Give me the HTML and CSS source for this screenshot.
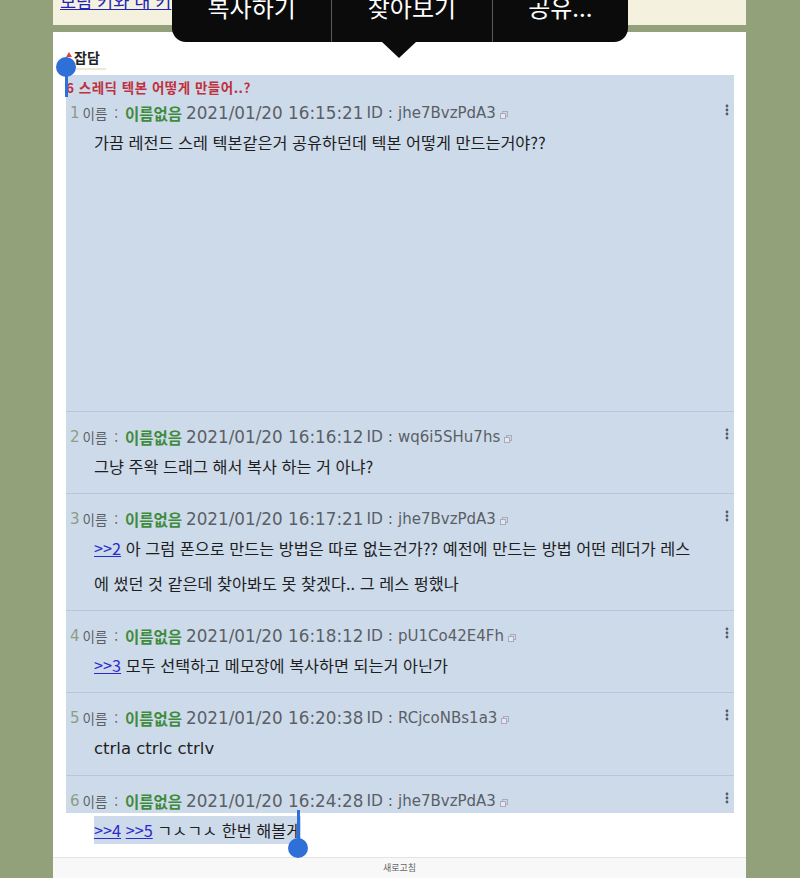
FILE: index.html
```html
<!DOCTYPE html>
<html lang="ko">
<head>
<meta charset="utf-8">
<title>스레딕</title>
<link rel="stylesheet" href="styles.css">
</head>
<body>
<div class="page">
  <div class="topbox"><a class="toplink" href="#">보림 키와 내 키</a></div>
  <div class="panel">
    <div class="content">
      <div class="tab"><span class="tri"></span>잡담</div>
      <div class="sel">
        <div class="title">6 스레딕 텍본 어떻게 만들어..?</div>
        <div class="post first">
          <div class="head"><span class="num">1</span><span class="lbl">이름 :</span><span class="name">이름없음</span><span class="date">2021/01/20 16:15:21</span><span class="id">ID : <span class="idv">jhe7BvzPdA3</span></span><svg class="copy" viewBox="0 0 8 8" width="8" height="8"><rect x="2.5" y="0.5" width="5" height="5" fill="none" stroke="#aab" stroke-width="1"/><rect x="0.5" y="2.5" width="5" height="5" fill="#e4e8ee" stroke="#aab" stroke-width="1"/></svg><svg class="more" viewBox="0 0 4 12" width="4" height="12"><circle cx="2" cy="2" r="1.4"/><circle cx="2" cy="6" r="1.4"/><circle cx="2" cy="10" r="1.4"/></svg></div>
          <div class="body">가끔 레전드 스레 텍본같은거 공유하던데 텍본 어떻게 만드는거야??</div>
        </div>
        <div class="post">
          <div class="head"><span class="num">2</span><span class="lbl">이름 :</span><span class="name">이름없음</span><span class="date">2021/01/20 16:16:12</span><span class="id">ID : <span class="idv">wq6i5SHu7hs</span></span><svg class="copy" viewBox="0 0 8 8" width="8" height="8"><rect x="2.5" y="0.5" width="5" height="5" fill="none" stroke="#aab" stroke-width="1"/><rect x="0.5" y="2.5" width="5" height="5" fill="#e4e8ee" stroke="#aab" stroke-width="1"/></svg><svg class="more" viewBox="0 0 4 12" width="4" height="12"><circle cx="2" cy="2" r="1.4"/><circle cx="2" cy="6" r="1.4"/><circle cx="2" cy="10" r="1.4"/></svg></div>
          <div class="body">그냥 주왁 드래그 해서 복사 하는 거 아냐?</div>
        </div>
        <div class="post">
          <div class="head"><span class="num">3</span><span class="lbl">이름 :</span><span class="name">이름없음</span><span class="date">2021/01/20 16:17:21</span><span class="id">ID : <span class="idv">jhe7BvzPdA3</span></span><svg class="copy" viewBox="0 0 8 8" width="8" height="8"><rect x="2.5" y="0.5" width="5" height="5" fill="none" stroke="#aab" stroke-width="1"/><rect x="0.5" y="2.5" width="5" height="5" fill="#e4e8ee" stroke="#aab" stroke-width="1"/></svg><svg class="more" viewBox="0 0 4 12" width="4" height="12"><circle cx="2" cy="2" r="1.4"/><circle cx="2" cy="6" r="1.4"/><circle cx="2" cy="10" r="1.4"/></svg></div>
          <div class="body"><a class="anchor" href="#">&gt;&gt;2</a> 아 그럼 폰으로 만드는 방법은 따로 없는건가?? 예전에 만드는 방법 어떤 레더가 레스<br>에 썼던 것 같은데 찾아봐도 못 찾겠다.. 그 레스 펑했나</div>
        </div>
        <div class="post">
          <div class="head"><span class="num">4</span><span class="lbl">이름 :</span><span class="name">이름없음</span><span class="date">2021/01/20 16:18:12</span><span class="id">ID : <span class="idv">pU1Co42E4Fh</span></span><svg class="copy" viewBox="0 0 8 8" width="8" height="8"><rect x="2.5" y="0.5" width="5" height="5" fill="none" stroke="#aab" stroke-width="1"/><rect x="0.5" y="2.5" width="5" height="5" fill="#e4e8ee" stroke="#aab" stroke-width="1"/></svg><svg class="more" viewBox="0 0 4 12" width="4" height="12"><circle cx="2" cy="2" r="1.4"/><circle cx="2" cy="6" r="1.4"/><circle cx="2" cy="10" r="1.4"/></svg></div>
          <div class="body"><a class="anchor" href="#">&gt;&gt;3</a> 모두 선택하고 메모장에 복사하면 되는거 아닌가</div>
        </div>
        <div class="post">
          <div class="head"><span class="num">5</span><span class="lbl">이름 :</span><span class="name">이름없음</span><span class="date">2021/01/20 16:20:38</span><span class="id">ID : <span class="idv">RCjcoNBs1a3</span></span><svg class="copy" viewBox="0 0 8 8" width="8" height="8"><rect x="2.5" y="0.5" width="5" height="5" fill="none" stroke="#aab" stroke-width="1"/><rect x="0.5" y="2.5" width="5" height="5" fill="#e4e8ee" stroke="#aab" stroke-width="1"/></svg><svg class="more" viewBox="0 0 4 12" width="4" height="12"><circle cx="2" cy="2" r="1.4"/><circle cx="2" cy="6" r="1.4"/><circle cx="2" cy="10" r="1.4"/></svg></div>
          <div class="body"><span class="latin">ctrla ctrlc ctrlv</span></div>
        </div>
        <div class="post last">
          <div class="head"><span class="num">6</span><span class="lbl">이름 :</span><span class="name">이름없음</span><span class="date">2021/01/20 16:24:28</span><span class="id">ID : <span class="idv">jhe7BvzPdA3</span></span><svg class="copy" viewBox="0 0 8 8" width="8" height="8"><rect x="2.5" y="0.5" width="5" height="5" fill="none" stroke="#aab" stroke-width="1"/><rect x="0.5" y="2.5" width="5" height="5" fill="#e4e8ee" stroke="#aab" stroke-width="1"/></svg><svg class="more" viewBox="0 0 4 12" width="4" height="12"><circle cx="2" cy="2" r="1.4"/><circle cx="2" cy="6" r="1.4"/><circle cx="2" cy="10" r="1.4"/></svg></div>
        </div>
      </div>
      <div class="body lastbody"><span class="hl"><a class="anchor" href="#">&gt;&gt;4</a> <a class="anchor" href="#">&gt;&gt;5</a> ㄱㅅㄱㅅ 한번 해볼게</span></div>
    </div>
    <div class="footer">새로고침</div>
  </div>
</div>

<div class="popover">
  <div class="pop-item w1">복사하기</div>
  <div class="pop-item w1 sep">찾아보기</div>
  <div class="pop-item w2 sep">공유...</div>
</div>
<div class="pop-arrow"></div>

<div class="handle start"><span class="knob"></span><span class="stem"></span></div>
<div class="handle end"><span class="stem"></span><span class="knob"></span></div>
</body>
</html>
```

FILE: styles.css
```css
html, body {
  margin: 0;
  padding: 0;
}
body {
  background: #93a17a;
  font-family: "Noto Sans CJK KR", "Noto Sans", sans-serif;
  height: 878px;
  overflow: hidden;
  position: relative;
}
.page {
  margin-left: 53px;
  width: 693px;
}
.topbox {
  background: #f4f2de;
  height: 25px;
  overflow: hidden;
  padding-left: 7px;
}
.toplink {
  display: block;
  margin-top: -8px;
  font-size: 17.5px;
  line-height: 18px;
  color: #2323b8;
  text-decoration: underline;
}
.panel {
  margin-top: 7px;
  background: #fff;
  height: 846px;
  display: flex;
  flex-direction: column;
}
.content {
  padding: 14px 12px 0 13px;
  flex: 1;
}
.tab {
  display: flex;
  width: fit-content;
  align-items: center;
  font-size: 14px;
  font-weight: bold;
  color: #222;
  line-height: 22px;
  padding-right: 6px;
  border-bottom: 2px solid #efe8d2;
  margin-bottom: 5px;
}
.tri {
  width: 0;
  height: 0;
  border-left: 3px solid transparent;
  border-right: 3px solid transparent;
  border-bottom: 5px solid #d24a3a;
  margin-right: 2px;
  margin-top: -6px;
}
.sel {
  background: #cddaea;
}
.title {
  font-size: 13.5px;
  font-weight: bold;
  color: #c0303d;
  line-height: 24px;
  letter-spacing: 0.5px;
}
.post {
  border-top: 1px solid #b9c6d7;
  padding: 13px 0 9px;
}
.post.first {
  border-top: 0;
  padding: 2px 0 251px;
}
.post.last {
  padding-bottom: 0;
}
.head {
  display: flex;
  align-items: center;
  height: 24px;
  padding-left: 4px;
  font-family: "DejaVu Sans", "Noto Sans CJK KR", sans-serif;
  font-size: 15.5px;
  color: #5a5f66;
  white-space: nowrap;
}
.num {
  color: #8e9c86;
  font-size: 15px;
  margin-right: 3px;
}
.lbl {
  font-family: "Noto Sans CJK KR", sans-serif;
  font-size: 13.5px;
  margin-right: 7px;
  word-spacing: 3px;
}
.name {
  font-family: "Noto Sans CJK KR", sans-serif;
  color: #3f8b3c;
  font-weight: bold;
  font-size: 15.5px;
  margin-right: 4px;
}
.date {
  font-size: 16.8px;
  margin-right: 3px;
}
.idv {
  font-size: 15px;
}
.copy {
  margin-left: 4px;
  margin-top: 3px;
}
.more {
  margin-left: auto;
  margin-right: 5px;
  align-self: flex-start;
  margin-top: 3px;
  fill: #555b66;
}
.body {
  padding-left: 28px;
  font-family: "Noto Sans CJK KR", sans-serif;
  font-size: 16.3px;
  line-height: 35px;
  color: #1e1e1e;
  white-space: nowrap;
}
.latin {
  font-family: "DejaVu Sans", sans-serif;
  font-size: 16.5px;
}
.lastbody {
  padding-bottom: 9px;
}
.hl {
  background: #cddaea;
  padding: 2px 0;
}
.anchor {
  color: #2a2ad0;
  text-decoration: underline;
}
.footer {
  height: 23px;
  border-top: 1px solid #e3e3e3;
  background: #f8f8f8;
  text-align: center;
  font-size: 9px;
  line-height: 20px;
  color: #666;
}

/* text-selection popover (overlay) */
.popover {
  position: absolute;
  left: 172px;
  top: -30px;
  width: 456px;
  height: 72px;
  background: #0b0b0b;
  border-radius: 14px;
  display: flex;
}
.pop-item {
  display: flex;
  align-items: center;
  justify-content: center;
  color: #fff;
  font-size: 24px;
  height: 72px;
}
.pop-item.w1 { width: 160px; }
.pop-item.w2 { width: 136px; }
.pop-item.sep { border-left: 1px solid #5a5a5a; }
.pop-arrow {
  position: absolute;
  left: 382px;
  top: 42px;
  width: 0;
  height: 0;
  border-left: 17px solid transparent;
  border-right: 17px solid transparent;
  border-top: 16px solid #0b0b0b;
}

/* selection handles (overlay) */
.handle {
  position: absolute;
  display: flex;
  flex-direction: column;
  align-items: center;
  width: 20px;
}
.handle .knob {
  width: 20px;
  height: 20px;
  border-radius: 50%;
  background: #2e6fd8;
}
.handle .stem {
  width: 3px;
  background: #2e6fd8;
}
.handle.start {
  left: 56px;
  top: 57px;
}
.handle.start .stem {
  height: 30px;
  margin-top: -10px;
}
.handle.end {
  left: 288px;
  top: 810px;
}
.handle.end .stem {
  height: 32px;
  margin-bottom: -4px;
}
```
